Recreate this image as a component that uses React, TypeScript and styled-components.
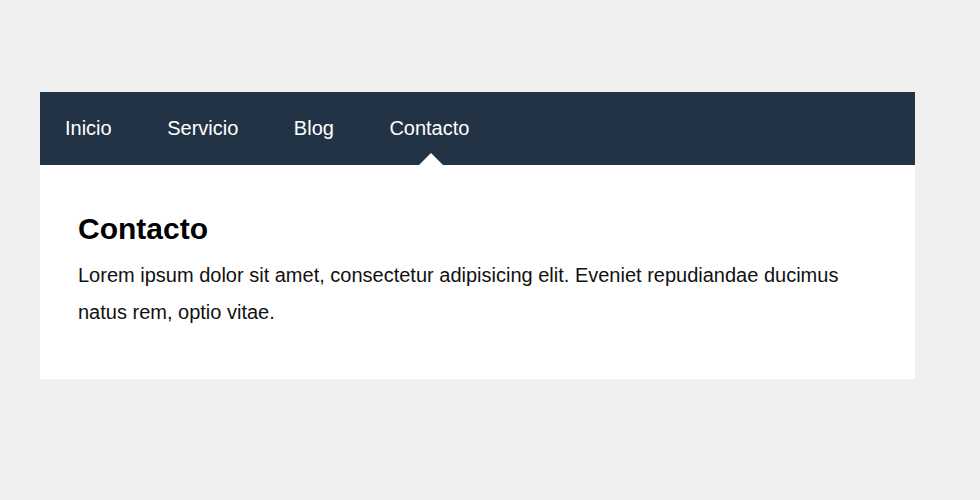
import React from "react";
import styled, { createGlobalStyle } from "styled-components";

const Global = createGlobalStyle`
  html, body { margin: 0; padding: 0; background: #f0f0f0; }
  body { font-family: "Liberation Sans", Arial, sans-serif; }
`;

const Page = styled.div`
  padding: 92px 65px 0 40px;
`;

const Card = styled.div`
  width: 875px;
  background: #ffffff;
`;

const Nav = styled.nav`
  background: #223345;
  height: 73px;
`;

const Menu = styled.ul`
  list-style: none;
  margin: 0;
  padding: 0 0 0 25px;
  display: flex;
  gap: 55.5px;
  height: 100%;
`;

const Item = styled.li<{ $active?: boolean }>`
  position: relative;
  display: flex;
  align-items: center;
  color: #ffffff;
  font-size: 20px;
  &::after {
    content: "";
    display: ${(p) => (p.$active ? "block" : "none")};
    position: absolute;
    bottom: 0;
    left: calc(50% + 2px);
    transform: translateX(-50%);
    border-left: 12.5px solid transparent;
    border-right: 12.5px solid transparent;
    border-bottom: 12.5px solid #ffffff;
  }
`;

const Content = styled.section`
  padding: 47px 38px 48px;
`;

const Title = styled.h2`
  margin: 0 0 10.5px;
  font-size: 30px;
  font-weight: bold;
  color: #000;
`;

const Text = styled.p`
  margin: 0;
  font-size: 20px;
  line-height: 37px;
  color: #111;
`;

const items = ["Inicio", "Servicio", "Blog", "Contacto"];

export default function App() {
  return (
    <>
      <Global />
      <Page>
        <Card>
          <Nav>
            <Menu>
              {items.map((it) => (
                <Item key={it} $active={it === "Contacto"}>
                  {it}
                </Item>
              ))}
            </Menu>
          </Nav>
          <Content>
            <Title>Contacto</Title>
            <Text>
              Lorem ipsum dolor sit amet, consectetur adipisicing elit. Eveniet repudiandae ducimus natus rem, optio vitae.
            </Text>
          </Content>
        </Card>
      </Page>
    </>
  );
}
